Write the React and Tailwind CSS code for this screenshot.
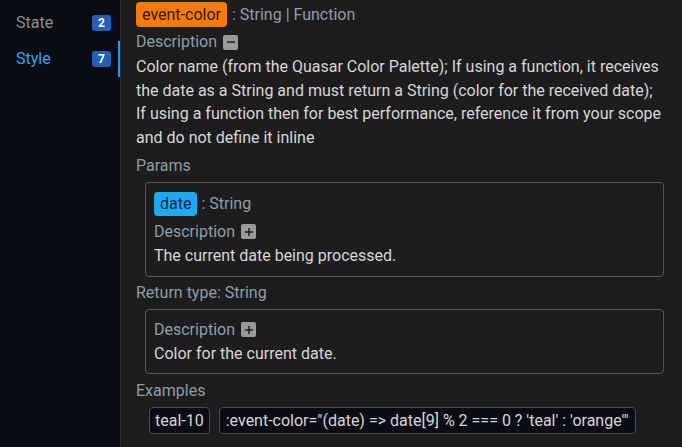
import { Minus, Plus } from 'lucide-react';

const label = 'text-[#8b9eab]';
const body = 'text-[#d6d6d6]';

function Toggle({ open }) {
  return (
    <span className="inline-flex items-center justify-center w-[15px] h-[15px] rounded-[2px] bg-[#9a9a9a] ml-[6px]">
      {open ? (
        <Minus className="w-3 h-3 text-[#1d1d1d]" strokeWidth={3} />
      ) : (
        <Plus className="w-3 h-3 text-[#1d1d1d]" strokeWidth={3} />
      )}
    </span>
  );
}

function NavItem({ name, count, active }) {
  return (
    <div className="relative flex items-center justify-between h-[36px] pl-4 pr-[9px]">
      <span className={active ? 'text-[#2ea7f5]' : 'text-[#8d8f93]'}>{name}</span>
      <span className="w-[19px] h-[16px] rounded-[3px] bg-[#2560b8] text-white text-[12px] font-bold flex items-center justify-center">
        {count}
      </span>
      {active && <span className="absolute right-0 top-0 bottom-0 w-[2px] bg-[#2196f3]" />}
    </div>
  );
}

export default function App() {
  return (
    <div className="flex w-[682px] h-[447px] overflow-hidden bg-[#1d1d1d] text-[16px] font-['Roboto',sans-serif]">
      {/* Sidebar */}
      <div className="w-[121px] shrink-0 bg-[#090c13] border-r border-[#2c2f36] pt-[5px]">
        <NavItem name="State" count="2" />
        <NavItem name="Style" count="7" active />
      </div>

      {/* Main */}
      <div className="flex-1 pl-[15px] pr-[18px] leading-[23.7px]">
        <div className="flex items-center h-[27px] mt-[1px]">
          <span className="bg-[#f57c00] text-[#2a1a08] rounded-[4px] px-[6px] h-[25px] flex items-center">event-color</span>
          <span className={`${label} ml-[5px]`}>: String | Function</span>
        </div>

        <div className="flex items-center h-[24px] mt-[2px]">
          <span className={label}>Description</span>
          <Toggle open />
        </div>
        <p className={`${body} mt-[1px]`}>
          Color name (from the Quasar Color Palette); If using a function, it receives the date as a String and must
          return a String (color for the received date); If using a function then for best performance, reference it
          from your scope and do not define it inline
        </p>

        <div className={`${label} mt-[4px]`}>Params</div>
        <div className="mt-[4px] ml-[9px] border border-[#585858] rounded-[4px] px-[8px] pt-[9px] pb-[9px]">
          <div className="flex items-center h-[24px]">
            <span className="bg-[#1eaaf1] text-[#0e2a3d] rounded-[4px] px-[6px] h-[24px] flex items-center">date</span>
            <span className={`${label} ml-[4px]`}>: String</span>
          </div>
          <div className="flex items-center h-[24px] mt-[4px]">
            <span className={label}>Description</span>
            <Toggle />
          </div>
          <div className={body}>The current date being processed.</div>
        </div>

        <div className={`${label} mt-[4px]`}>Return type: String</div>
        <div className="mt-[4px] ml-[9px] border border-[#585858] rounded-[4px] px-[8px] pt-[8px] pb-[7px]">
          <div className="flex items-center h-[24px]">
            <span className={label}>Description</span>
            <Toggle />
          </div>
          <div className={body}>Color for the current date.</div>
        </div>

        <div className={`${label} mt-[5px]`}>Examples</div>
        <div className="flex gap-[9px] mt-[5px] ml-[13px]">
          <span className="bg-[#090c13] border border-[#4a4d53] rounded-[4px] px-[5px] h-[27px] flex items-center text-[#d6d6d6]">teal-10</span>
          <span className="bg-[#090c13] border border-[#4a4d53] rounded-[4px] px-[6px] h-[27px] flex items-center text-[#d6d6d6]">
            :event-color="(date) =&gt; date[9] % 2 === 0 ? 'teal' : 'orange'"
          </span>
        </div>
      </div>
    </div>
  );
}
